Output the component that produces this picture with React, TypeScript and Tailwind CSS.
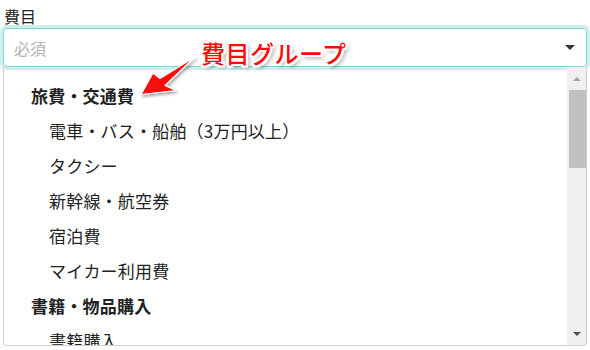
import React from "react";

interface Option {
  label: string;
  group?: boolean;
}

const options: Option[] = [
  { label: "旅費・交通費", group: true },
  { label: "電車・バス・船舶（3万円以上）" },
  { label: "タクシー" },
  { label: "新幹線・航空券" },
  { label: "宿泊費" },
  { label: "マイカー利用費" },
  { label: "書籍・物品購入", group: true },
  { label: "書籍購入" },
];

function Callout() {
  return (
    <>
      {/* red arrow pointing at the group header */}
      <svg
        className="absolute left-0 top-0 pointer-events-none"
        width="590"
        height="350"
        viewBox="0 0 590 350"
      >
        <defs>
          <filter id="arrowShadow" x="-20%" y="-20%" width="140%" height="140%">
            <feDropShadow dx="1.5" dy="2" stdDeviation="1.5" floodColor="#000" floodOpacity="0.35" />
          </filter>
        </defs>
        <polygon
          points="141,94.5 153,73 160,78.5 195,57 165,85.5 176,90.5"
          fill="#ff0d0d"
          stroke="#fff"
          strokeWidth="1.2"
          strokeLinejoin="round"
          filter="url(#arrowShadow)"
        />
      </svg>
      <div className="absolute left-[201px] top-[40px] text-[24px] leading-[26px] font-medium text-[#ff0a0a] tracking-[0.5px] [text-shadow:-2px_-2px_0_#fff,2px_-2px_0_#fff,-2px_2px_0_#fff,2px_2px_0_#fff,0_2px_0_#fff,0_-2px_0_#fff,2px_0_0_#fff,-2px_0_0_#fff,3px_3px_4px_rgba(0,0,0,0.45)]">
        費目グループ
      </div>
    </>
  );
}

export default function App() {
  return (
    <div className="relative w-[590px] h-[350px] overflow-hidden bg-white px-[3px] font-['Noto_Sans_CJK_JP','Noto_Sans',sans-serif] text-[#222]">
      {/* field label */}
      <div className="h-[28px] pt-[6px] pl-[1px] text-[16px] leading-[20px]">費目</div>

      {/* select box */}
      <div className="flex items-center justify-between h-[39px] rounded-[4px] border border-[#7fd7d6] shadow-[0_0_0_3px_#cdefee] pl-[10px] pr-[11px]">
        <span className="text-[16px] text-[#b3b3b3]">必須</span>
        <span className="w-0 h-0 border-x-[5px] border-x-transparent border-t-[5px] border-t-[#333]" />
      </div>

      {/* dropdown list */}
      <div className="flex h-[279px] border-x border-b border-[#d0d0d0] rounded-b-[4px] overflow-hidden">
        <div className="flex-1 pt-[11px]">
          {options.map(opt => (
            <div
              key={opt.label}
              className={`flex items-center h-[35px] text-[17px] tracking-[0.2px] ${opt.group ? "pl-[27px] font-bold" : "pl-[45px]"}`}
            >
              {opt.label}
            </div>
          ))}
        </div>

        {/* scrollbar */}
        <div className="flex flex-col w-[19px] bg-[#f0f0f0]">
          <div className="flex items-center justify-center h-[23px]">
            <span className="w-0 h-0 border-x-[4px] border-x-transparent border-b-[4px] border-b-[#a3a3a3]" />
          </div>
          <div className="ml-[2px] w-[17px] h-[78px] bg-[#c1c1c1]" />
          <div className="flex-1" />
          <div className="flex items-center justify-center h-[23px]">
            <span className="w-0 h-0 border-x-[4px] border-x-transparent border-t-[4px] border-t-[#505050]" />
          </div>
        </div>
      </div>

      <Callout />
    </div>
  );
}
